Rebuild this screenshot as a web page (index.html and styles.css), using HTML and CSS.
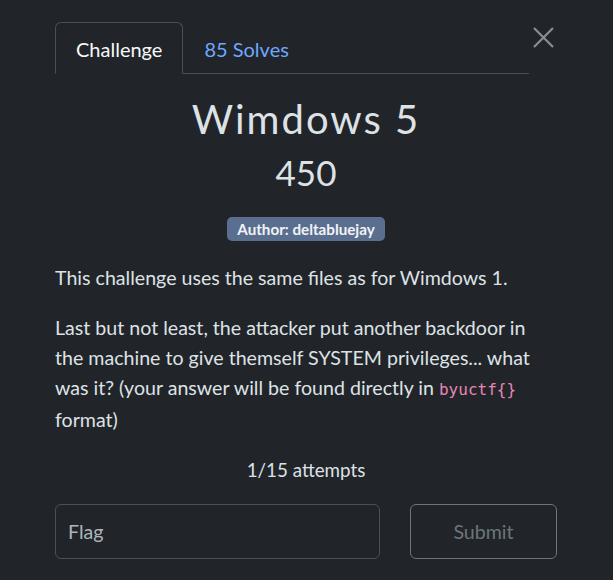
FILE: index.html
```html
<!DOCTYPE html>
<html>
<head>
<meta charset="utf-8">
<link rel="stylesheet" href="styles.css">
</head>
<body>
<div class="modal">
  <div class="head">
    <ul class="tabs">
      <li class="tab active">Challenge</li>
      <li class="tab link">85 Solves</li>
    </ul>
    <button class="close" aria-label="Close">
      <svg width="21" height="21" viewBox="0 0 21 21"><path d="M1 1L20 20M20 1L1 20" stroke="#8a8d91" stroke-width="2.2" fill="none"/></svg>
    </button>
  </div>
  <h2 class="title">Wimdows 5</h2>
  <div class="points">450</div>
  <div class="badge-row"><span class="badge">Author: deltabluejay</span></div>
  <div class="desc">
    <p>This challenge uses the same files as for Wimdows 1.</p>
    <p>Last but not least, the attacker put another backdoor in the machine to give themself SYSTEM privileges... what was it? (your answer will be found directly in <code>byuctf{}</code> format)</p>
  </div>
  <div class="attempts">1/15 attempts</div>
  <div class="form">
    <div class="input">Flag</div>
    <button class="submit">Submit</button>
  </div>
</div>
</body>
</html>
```
FILE: styles.css
```css
html, body {
  margin: 0;
  padding: 0;
  background: #212529;
  height: 100%;
}
body {
  font-family: Lato, "Noto Sans", sans-serif;
  color: #dee2e6;
}
.modal {
  padding: 22px 56px 0 55px;
}
.head {
  display: flex;
  align-items: flex-start;
}
.tabs {
  list-style: none;
  margin: 0;
  padding: 0;
  display: flex;
  flex: 1;
  border-bottom: 1px solid #495057;
}
.tab {
  font-size: 20px;
  padding: 0 20px;
  height: 50px;
  line-height: 52px;
  border: 1px solid transparent;
  border-radius: 6px 6px 0 0;
  margin-bottom: -1px;
}
.tab.active {
  color: #f8f9fa;
  border-color: #495057;
  border-bottom-color: #212529;
  background: #212529;
}
.tab.link {
  color: #6ea8fe;
}
.close {
  background: none;
  border: 0;
  padding: 0;
  margin: 5px 3px 0 4px;
  width: 21px;
  height: 21px;
  display: block;
}
.close svg { display: block; }
.title {
  margin: 21px 0 0;
  text-align: center;
  font-size: 40px;
  font-weight: 400;
  line-height: 48px;
  letter-spacing: 2px;
  color: #dee2e6;
}
.points {
  text-align: center;
  font-size: 35px;
  line-height: 42px;
  margin-top: 8px;
  color: #dee2e6;
}
.badge-row {
  text-align: center;
  margin-top: 24px;
  line-height: 24px;
  height: 24px;
}
.badge {
  display: inline-block;
  vertical-align: top;
  background: #5a6f8f;
  color: #f1f3f5;
  font-weight: 700;
  font-size: 15.2px;
  line-height: 24px;
  padding: 0 10px;
  border-radius: 5px;
}
.desc {
  margin-top: 22px;
  font-size: 19.6px;
  line-height: 30px;
}
.desc p {
  margin: 0 0 20px;
}
code {
  font-family: "DejaVu Sans Mono", monospace;
  color: #e685b5;
  font-size: 16px;
}
.attempts {
  text-align: center;
  font-size: 18.8px;
  line-height: 24px;
  margin-top: 23px;
}
.form {
  display: flex;
  gap: 30px;
  margin-top: 22px;
}
.input {
  flex: 0 0 325px;
  box-sizing: border-box;
  height: 55px;
  border: 1px solid #495057;
  border-radius: 6px;
  font-size: 19.6px;
  line-height: 53px;
  padding-left: 12px;
  color: #adb5bd;
}
.submit {
  width: 147px;
  height: 55px;
  background: transparent;
  border: 1px solid #6c757d;
  border-radius: 6px;
  color: #6c757d;
  font-family: Lato, sans-serif;
  font-size: 19.6px;
  padding: 0;
}
```
